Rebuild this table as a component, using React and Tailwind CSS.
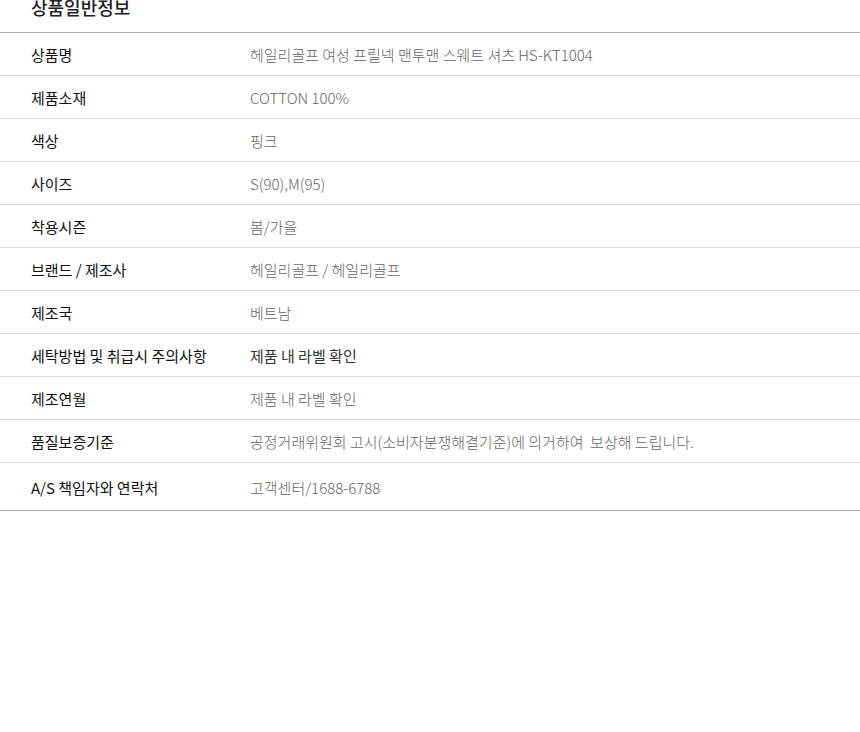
import React from "react";

const rows = [
  ["상품명", "헤일리골프 여성 프릴넥 맨투맨 스웨트 셔츠 HS-KT1004"],
  ["제품소재", "COTTON 100%"],
  ["색상", "핑크"],
  ["사이즈", "S(90),M(95)"],
  ["착용시즌", "봄/가을"],
  ["브랜드 / 제조사", "헤일리골프 / 헤일리골프"],
  ["제조국", "베트남"],
  ["세탁방법 및 취급시 주의사항", "제품 내 라벨 확인", true],
  ["제조연월", "제품 내 라벨 확인"],
  ["품질보증기준", "공정거래위원회 고시(소비자분쟁해결기준)에 의거하여  보상해 드립니다."],
  ["A/S 책임자와 연락처", "고객센터/1688-6788"],
];

export default function App() {
  return (
    <div
      className="w-full bg-white"
      style={{ fontFamily: '"Noto Sans CJK KR", "Noto Sans", sans-serif' }}
    >
      <div className="h-[32px] overflow-hidden pl-[31px]">
        <div className="-mt-[6px] text-[18px] font-medium leading-[26px] text-[#222]">
          상품일반정보
        </div>
      </div>
      <div className="border-t border-[#aaa] border-b">
        {rows.map(([k, v, bold], i) => (
          <div
            key={i}
            className={
              "flex items-center " +
              (i === rows.length - 1
                ? "h-[47px]"
                : "h-[43px] border-b border-[#ddd]")
            }
          >
            <div className="w-[250px] shrink-0 pl-[31px] pt-[3px] text-[15px] font-normal text-[#111]">
              {k}
            </div>
            <div
              className={
                "whitespace-pre pt-[3px] text-[15px] " +
                (bold ? "font-normal text-[#333]" : "font-light text-[#666]")
              }
            >
              {v}
            </div>
          </div>
        ))}
      </div>
    </div>
  );
}
